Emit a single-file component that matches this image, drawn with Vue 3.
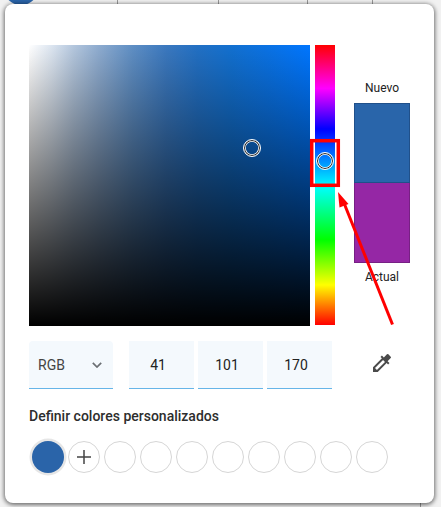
<script setup>
const empties = Array.from({ length: 8 }, (_, i) => i)
</script>

<template>
  <div class="page">
    <div class="backdrop">
      <span class="avatar"></span>
      <span class="tick t1"></span>
      <span class="tick t2"></span>
      <span class="tick t3"></span>
      <span class="tick t4"></span>
      <span class="tick t5"></span>
    </div>
    <div class="card">
      <div class="picker">
        <div class="sat">
          <span class="knob sat-knob"></span>
        </div>
        <div class="hue">
          <span class="knob hue-knob"></span>
        </div>
        <div class="preview">
          <div class="plabel">Nuevo</div>
          <div class="box new"></div>
          <div class="box old"></div>
          <div class="plabel actual">Actual</div>
        </div>
      </div>
      <div class="controls">
        <div class="field select">
          <span>RGB</span>
          <svg width="10" height="6" viewBox="0 0 10 6"><path d="M.8.8 5 5 9.200.8" fill="none" stroke="#6b6f73" stroke-width="1.700"/></svg>
        </div>
        <div class="inputs">
          <div class="field num">41</div>
          <div class="field num">101</div>
          <div class="field num">170</div>
        </div>
        <svg class="dropper" width="24" height="24" viewBox="0 0 24 24">
          <path d="M20.710 5.630l-2.340-2.340a1 1 0 0 0-1.410 0l-3.120 3.120-1.930-1.910-1.410 1.410 1.420 1.420L3 16.250V21h4.750l8.920-8.920 1.420 1.420 1.410-1.410-1.920-1.920 3.120-3.120a1 1 0 0 0 .01-1.420zM6.920 19 5 17.080l8.060-8.060 1.920 1.920L6.920 19z" fill="#4a4a4a"/>
        </svg>
      </div>
      <div class="title">Definir colores personalizados</div>
      <div class="swatches">
        <span class="current"></span>
        <span class="swatch add">
          <svg width="16" height="16" viewBox="0 0 16 16"><path d="M8 1v14M1 8h14" stroke="#444" stroke-width="1.500"/></svg>
        </span>
        <span v-for="i in empties" :key="i" class="swatch"></span>
      </div>
    </div>
    <svg class="annotation" width="441" height="507" viewBox="0 0 441 507">
      <rect x="311.700" y="140.700" width="26.600" height="44.600" fill="none" stroke="#f00" stroke-width="3.500"/>
      <path d="M392.500 324.500 344 203" stroke="#f00" stroke-width="3" fill="none"/>
      <path d="M338 192 348.500 204 339.500 207.500z" fill="#f00"/>
    </svg>
  </div>
</template>

<style>
html, body { margin: 0; padding: 0; }
</style>

<style scoped>
.page {
  position: relative;
  width: 441px;
  height: 507px;
  overflow: hidden;
  background: #f1f1f1;
  font-family: Roboto, "Liberation Sans", sans-serif;
  padding: 4px 0 0 5px;
  box-sizing: border-box;
}
.backdrop { position: absolute; inset: 0; }
.avatar {
  position: absolute;
  left: 3px;
  top: -31px;
  width: 36px;
  height: 36px;
  border-radius: 50%;
  background: #2a64a9;
}
.tick { position: absolute; top: 0; width: 1px; height: 4px; background: #999; }
.t1 { left: 117px; }
.t2 { left: 218px; }
.t3 { left: 307px; }
.t4 { left: 372px; }
.t5 { left: 420px; top: 503px; }
.card {
  position: relative;
  width: 429px;
  height: 499px;
  box-sizing: border-box;
  background: #fff;
  border-radius: 8px;
  padding: 41px 24px 0;
  box-shadow: 0 1px 4px 1px rgba(0, 0, 0, 0.55);
}
.picker { display: flex; align-items: flex-start; }
.sat {
  position: relative;
  width: 281px;
  height: 281px;
  background:
    linear-gradient(to bottom, rgba(0, 0, 0, 0), #000),
    linear-gradient(to right, #fff 0%, #dce5f0 8%, #b3c6dd 16%, #8dabcf 25%, #5e8ec4 37%, #3a78bf 49%, #2270c4 60%, #1270d0 72%, #0a72e4 85%, #0076ff 100%);
}
.hue {
  position: relative;
  width: 20px;
  height: 280px;
  margin-left: 5px;
  background: linear-gradient(to bottom, #f00 0%, #f0f 15.500%, #00f 30%, #0ff 50.600%, #0f0 69.600%, #ff0 85.700%, #f00 100%);
}
.knob {
  position: absolute;
  box-sizing: border-box;
  width: 18px;
  height: 18px;
  border-radius: 50%;
  border: 1px solid #fff;
  box-shadow: inset 0 0 0 1px #222, inset 0 0 0 1.800px #fff;
}
.sat-knob { left: 214px; top: 94px; }
.hue-knob { left: 1px; top: 107px; }
.preview {
  width: 56px;
  margin-left: 19px;
  display: flex;
  flex-direction: column;
  align-items: stretch;
}
.plabel {
  font-family: Roboto, sans-serif;
  font-size: 12px;
  line-height: 14px;
  text-align: center;
  color: #222;
  margin-top: 36px;
  margin-bottom: 8px;
}
.plabel.actual { margin-top: 7px; margin-bottom: 0; }
.box { height: 80px; box-sizing: border-box; }
.new { background: #2965aa; border: 1px solid #20508a; }
.old { background: #9527a5; border: 1px solid #772084; border-top: 0; }
.controls { display: flex; align-items: flex-start; margin-top: 15px; }
.field {
  height: 48px;
  box-sizing: border-box;
  background: #f4f9fd;
  border-bottom: 1px solid #66b5e8;
  font-size: 14px;
  display: flex;
  align-items: center;
}
.select {
  width: 84px;
  padding: 0 11px 0 9px;
  justify-content: space-between;
  color: #444;
  border-radius: 4px 4px 0 0;
}
.inputs { display: flex; gap: 4px; margin-left: 16px; }
.num { width: 65px; justify-content: center; color: #222; padding-right: 7px; }
.dropper { margin: 10px 0 0 38px; }
.title {
  margin-top: 19px;
  font-size: 14px;
  line-height: 16px;
  font-weight: 500;
  color: #2d2d2d;
}
.swatches { display: flex; align-items: center; gap: 4px; margin-top: 17px; margin-left: 3px; }
.current {
  width: 32px;
  height: 32px;
  border-radius: 50%;
  background: #2a64a9;
  box-shadow: 0 0 0 2.500px #e6e6e6;
}
.swatch {
  width: 32px;
  height: 32px;
  box-sizing: border-box;
  border: 1px solid #d6d6d6;
  border-radius: 50%;
  display: flex;
  align-items: center;
  justify-content: center;
}
.annotation { position: absolute; left: 0; top: 0; pointer-events: none; }
</style>
